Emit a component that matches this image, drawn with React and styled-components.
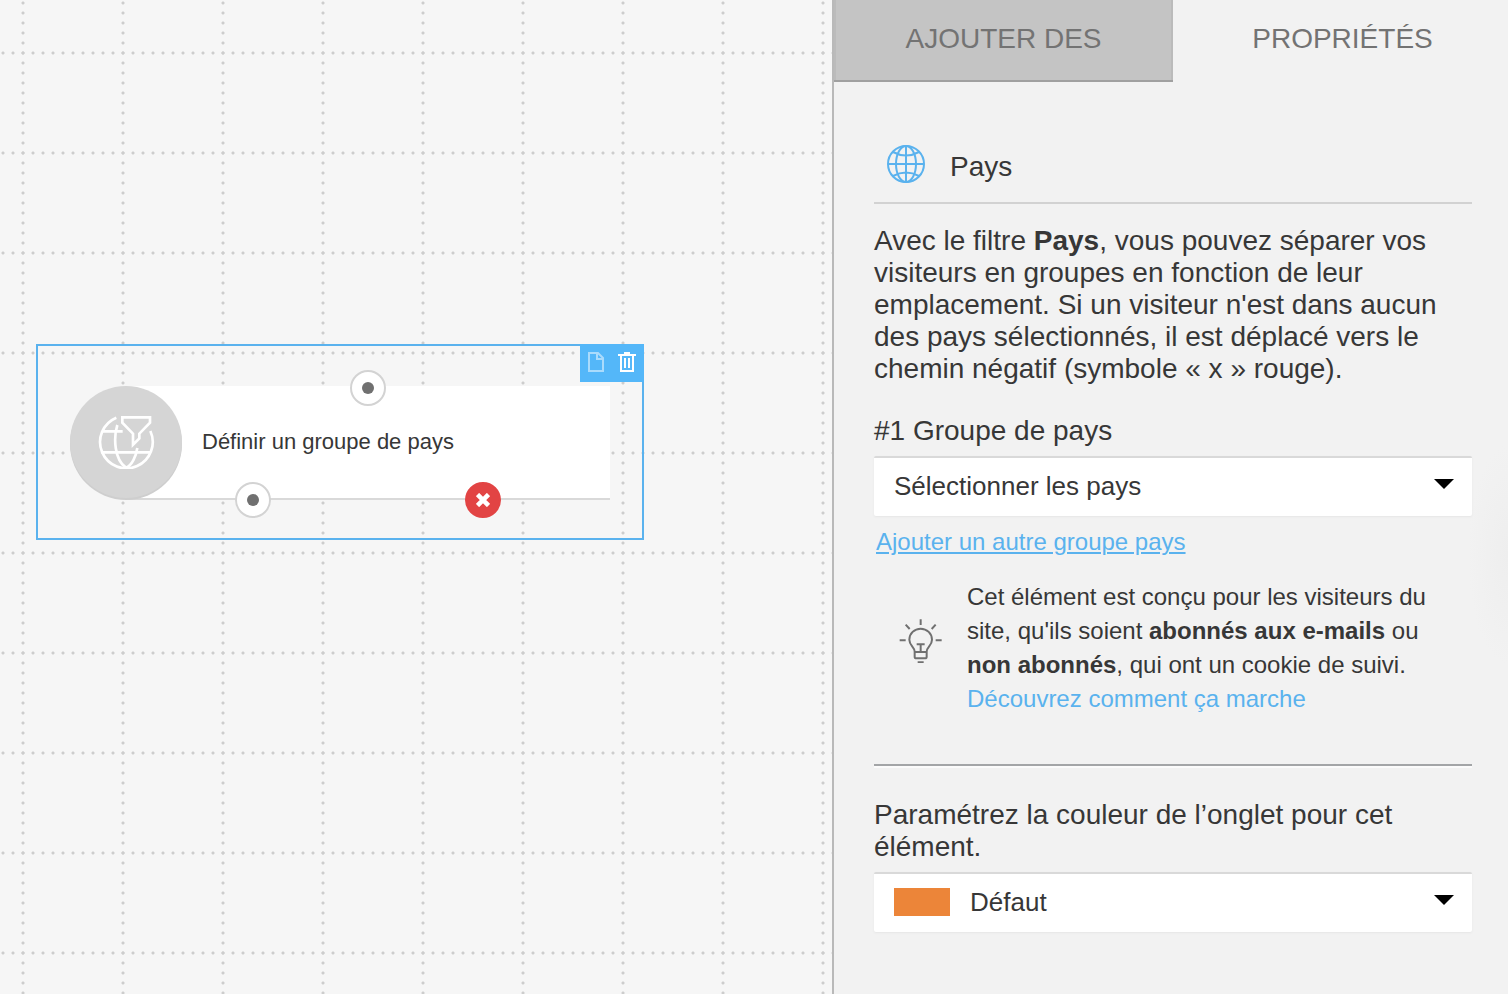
import React from "react";
import styled, { createGlobalStyle, css } from "styled-components";

const GlobalStyle = createGlobalStyle`
  *, *::before, *::after { box-sizing: border-box; }
  body {
    margin: 0;
    color: #373737;
    background: #f2f2f2;
    font-family: "Liberation Sans", Arial, Helvetica, sans-serif;
    font-size: 28px;
    line-height: 32px;
  }
  button, select { font: inherit; color: inherit; }
`;

const Layout = styled.div`
  display: grid;
  grid-template-columns: minmax(0, 1fr) 676px;
  min-height: 100vh;
`;

const Canvas = styled.main`
  position: relative;
  overflow: hidden;
  background-color: #f6f6f6;
  background-image:
    radial-gradient(circle at 3px 3px, #cdcdcd 1px, transparent 2px),
    radial-gradient(circle at 23px 3px, #cdcdcd 1px, transparent 2px);
  background-size: 10px 100px, 100px 10px;
  background-position: 0 50px, 0 0;
`;

const Selection = styled.section`
  position: absolute;
  left: 36px;
  top: 344px;
  width: 608px;
  height: 196px;
  padding: 40px 32px;
  border: 2px solid #5ab2ee;
`;

const SelectionTools = styled.div`
  position: absolute;
  top: -2px;
  right: -2px;
  display: flex;
  justify-content: space-between;
  width: 64px;
  height: 38px;
  padding: 7px 7px 0;
  background: #54b7f9;
`;

const ToolButton = styled.button`
  display: flex;
  align-items: flex-start;
  padding: 0;
  border: 0;
  background: none;
  color: #fff;
  opacity: ${(p) => (p.$faded ? 0.5 : 1)};
`;

const Node = styled.div`
  position: relative;
  display: flex;
  align-items: center;
  gap: 20px;
  height: 114px;
  padding-bottom: 2px;
  background: linear-gradient(#fff, #fff) 56px 0 / calc(100% - 56px) 112px no-repeat,
    linear-gradient(#d9d9d9, #d9d9d9) 56px 112px / calc(100% - 56px) 2px no-repeat;
`;

const NodeBadge = styled.div`
  display: grid;
  place-items: center;
  width: 112px;
  height: 112px;
  border-radius: 50%;
  background: #d5d5d5;
  box-shadow: 0 2px 0 #cecece;
  color: #fff;
`;

const NodeTitle = styled.span`
  font-size: 22px;
  line-height: 26px;
`;

const Port = styled.button`
  position: absolute;
  left: ${(p) => p.$x}px;
  top: ${(p) => p.$y}px;
  display: grid;
  place-items: center;
  width: 36px;
  height: 36px;
  padding: 0;
  border: 2px solid #d3d3d3;
  border-radius: 50%;
  background: #fff;
  ${(p) =>
    p.$negative &&
    css`
      border-color: #e24444;
      background: #e24444;
    `}
`;

const PortDot = styled.span`
  width: 12px;
  height: 12px;
  border-radius: 50%;
  background: #707070;
`;

const Panel = styled.aside`
  border-left: 2px solid #b9b9b9;
  background: radial-gradient(ellipse 40px 110px at 100% 555px, #eeeeee, #f2f2f2);
`;

const Tabs = styled.div`
  display: grid;
  grid-template-columns: 339px 1fr;
`;

const Tab = styled.button`
  height: 82px;
  padding: 0 0 4px 4px;
  border: 0;
  background: transparent;
  color: #737373;
  ${(p) =>
    !p.$active &&
    css`
      padding: 0 0 2px;
      border-bottom: 2px solid #a0a0a0;
      background: #c4c4c4;
      box-shadow: inset 2px 0 #bbb, inset -2px 0 #bbb;
    `}
`;

const PanelBody = styled.div`
  padding: 56px 36px 62px 40px;
`;

const PanelHeader = styled.header`
  display: flex;
  align-items: center;
  gap: 25px;
  height: 66px;
  padding: 0 13px 12px;
  border-bottom: 2px solid #d2d2d2;
  color: #5ab2ee;
`;

const PanelTitle = styled.h1`
  margin: 0;
  padding-top: 6px;
  color: #373737;
  font-size: 28px;
  font-weight: 400;
  line-height: 32px;
`;

const Description = styled.p`
  margin: 21px 0 30px;
`;

const FieldLabel = styled.label`
  display: block;
  margin-bottom: 9px;
`;

const SelectBox = styled.div`
  position: relative;
  height: 60px;
  border-top: 2px solid #d9d9d9;
  border-radius: 2px;
  background: #fff;
  box-shadow: 0 1px 2px #e6e6e6;
`;

const Select = styled.select`
  display: block;
  width: 100%;
  height: 58px;
  padding: 0 56px 2px ${(p) => (p.$withSwatch ? 96 : 20)}px;
  border: 0;
  appearance: none;
  background: transparent;
  font-size: 26px;
`;

const Swatch = styled.span`
  position: absolute;
  left: 20px;
  top: 14px;
  width: 56px;
  height: 28px;
  background: #ec8539;
  pointer-events: none;
`;

const Caret = styled.svg`
  position: absolute;
  right: 18px;
  top: 21px;
  pointer-events: none;
`;

const AddLink = styled.a`
  display: block;
  margin: 10px 2px 22px;
  color: #5ab2ee;
  font-size: 24px;
  text-underline-offset: 2px;
  text-decoration-thickness: 2px;
`;

const Tip = styled.div`
  display: grid;
  grid-template-columns: 44px 1fr;
  align-items: center;
  gap: 24px;
  padding: 0 24px 0 25px;
  color: #707070;

  svg { margin-bottom: 14px; }
`;

const TipText = styled.p`
  margin: 0;
  color: #373737;
  font-size: 24px;
  line-height: 34px;

  a {
    color: #5ab2ee;
    text-decoration: none;
  }
`;

const Divider = styled.hr`
  height: 4px;
  margin: 48px 0 31px;
  border: solid #fbfbfb;
  border-width: 2px 0;
  border-top-color: #a3a5a7;
`;

function GlobeFilterIcon() {
  return (
    <svg width="60" height="54" viewBox="226 256 180 162" fill="none" stroke="currentColor" strokeWidth="8" aria-hidden="true">
      <path d="M287 264A79 79 0 1 0 389 304" />
      <path d="M246 305H306M242 368H389" />
      <path d="M290 286C278 325 281 390 316 414C334 407 346 380 350 355" />
      <path d="M305 263H388V279L356 312V326L337 345V312L305 279Z" />
    </svg>
  );
}

function GlobeIcon() {
  return (
    <svg width="38" height="38" viewBox="0 0 38 38" fill="none" stroke="currentColor" strokeWidth="2" aria-hidden="true">
      <circle cx="19" cy="19" r="18" />
      <ellipse cx="19" cy="19" rx="10" ry="18" />
      <path d="M19 1V37M1 19H37M6 7Q19 14 32 7M6 31Q19 24 32 31" />
    </svg>
  );
}

function BulbIcon() {
  return (
    <svg width="44" height="44" viewBox="88 116 130 132" fill="none" stroke="currentColor" strokeWidth="6" aria-hidden="true">
      <path d="M152 117V134M107 133L119 146M197 133L185 146M89 180H107M197 180H215" />
      <path d="M134 214C134 199 118 196 118 178A34 33 0 0 1 186 178C186 196 170 199 170 214V229Q170 234 165 234H139Q134 234 134 229ZM134 215H170M140 192H164M152 192V215M143 246H161" />
    </svg>
  );
}

function PageIcon() {
  return (
    <svg width="18" height="22" viewBox="0 0 18 22" fill="none" stroke="currentColor" strokeWidth="2" aria-hidden="true">
      <path d="M2 2H11L16 7V20H2ZM10 2V8H16" />
    </svg>
  );
}

function TrashIcon() {
  return (
    <svg width="20" height="22" viewBox="0 0 20 22" fill="none" stroke="currentColor" strokeWidth="2" aria-hidden="true">
      <path d="M1 4H19M7 2H13M4 4V20H16V4M8 7V17M12 7V17" />
    </svg>
  );
}

function DropCaret() {
  return (
    <Caret width="20" height="10" viewBox="0 0 20 10" aria-hidden="true">
      <path d="M0 0H20L10 10Z" fill="#000" />
    </Caret>
  );
}

export default function App() {
  return (
    <>
      <GlobalStyle />
      <Layout>
        <Canvas>
          <Selection>
            <Node>
              <NodeBadge>
                <GlobeFilterIcon />
              </NodeBadge>
              <NodeTitle>Définir un groupe de pays</NodeTitle>
              <Port $x={280} $y={-16} aria-label="Entrée"><PortDot /></Port>
              <Port $x={165} $y={96} aria-label="Sortie"><PortDot /></Port>
              <Port $x={395} $y={96} $negative aria-label="Sortie négative">
                <svg width="14" height="14" viewBox="0 0 14 14" stroke="#fff" strokeWidth="4.6" aria-hidden="true">
                  <path d="M1.5 1.5L12.5 12.5M12.5 1.5L1.5 12.5" />
                </svg>
              </Port>
            </Node>
            <SelectionTools>
              <ToolButton $faded aria-label="Dupliquer"><PageIcon /></ToolButton>
              <ToolButton aria-label="Supprimer"><TrashIcon /></ToolButton>
            </SelectionTools>
          </Selection>
        </Canvas>

        <Panel>
          <Tabs role="tablist">
            <Tab role="tab" aria-selected="false">AJOUTER DES</Tab>
            <Tab role="tab" aria-selected="true" $active>PROPRIÉTÉS</Tab>
          </Tabs>
          <PanelBody>
            <PanelHeader>
              <GlobeIcon />
              <PanelTitle>Pays</PanelTitle>
            </PanelHeader>
            <Description>
              Avec le filtre <b>Pays</b>, vous pouvez séparer vos visiteurs en groupes en fonction de leur
              emplacement. Si un visiteur n'est dans aucun des pays sélectionnés, il est déplacé vers le
              chemin négatif (symbole « x » rouge).
            </Description>
            <FieldLabel htmlFor="countries">#1 Groupe de pays</FieldLabel>
            <SelectBox>
              <Select id="countries">
                <option>Sélectionner les pays</option>
              </Select>
              <DropCaret />
            </SelectBox>
            <AddLink href="#">Ajouter un autre groupe pays</AddLink>
            <Tip>
              <BulbIcon />
              <TipText>
                Cet élément est conçu pour les visiteurs du site, qu'ils soient <b>abonnés aux e-mails</b> ou{" "}
                <b>non abonnés</b>, qui ont un cookie de suivi. <a href="#">Découvrez comment ça marche</a>
              </TipText>
            </Tip>
            <Divider />
            <FieldLabel htmlFor="color">Paramétrez la couleur de l’onglet pour cet élément.</FieldLabel>
            <SelectBox>
              <Swatch />
              <Select id="color" $withSwatch>
                <option>Défaut</option>
              </Select>
              <DropCaret />
            </SelectBox>
          </PanelBody>
        </Panel>
      </Layout>
    </>
  );
}
